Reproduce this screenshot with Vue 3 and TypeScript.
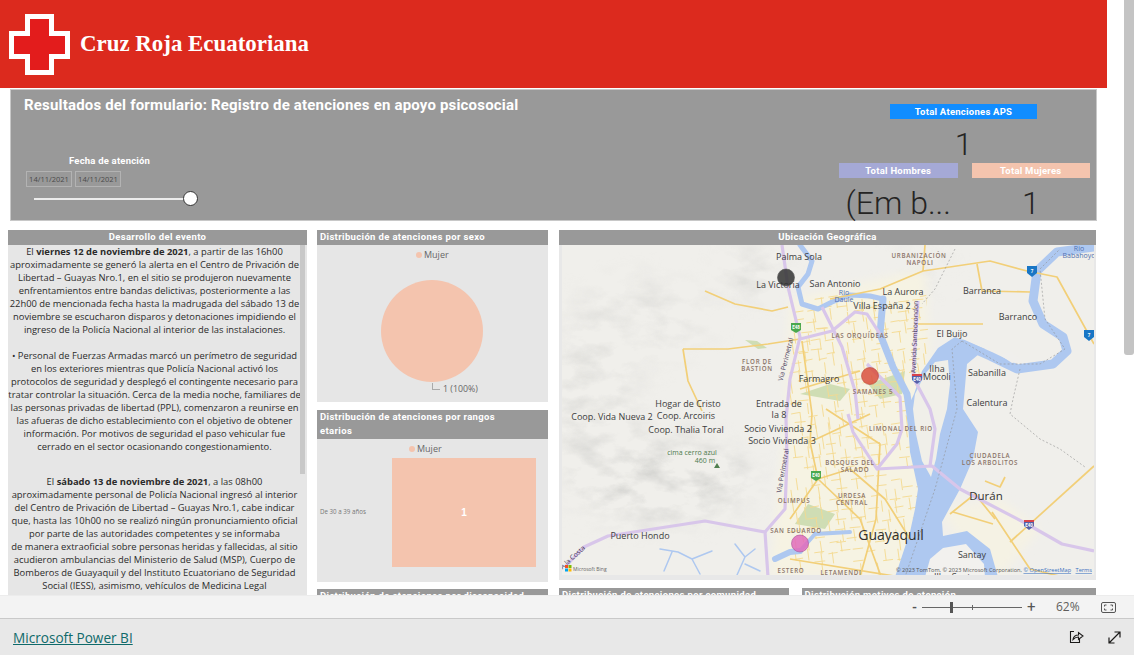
<script setup lang="ts">
interface Lbl { t: string; x: number; y: number; k?: string; r?: number }
const para1 = [
  ['El ', 'viernes 12 de noviembre de 2021', ', a partir de las 16h00'],
  ['aproximadamente se generó la alerta en el Centro de Privación de'],
  ['Libertad – Guayas Nro.1, en el sitio se produjeron nuevamente'],
  ['enfrentamientos entre bandas delictivas, posteriormente a las'],
  ['22h00 de mencionada fecha hasta la madrugada del sábado 13 de'],
  ['noviembre se escucharon disparos y detonaciones impidiendo el'],
  ['ingreso de la Policía Nacional al interior de las instalaciones.'],
]
const para2 = [
  '• Personal de Fuerzas Armadas marcó un perímetro de seguridad',
  'en los exteriores mientras que Policía Nacional activó los',
  'protocolos de seguridad y desplegó el contingente necesario para',
  'tratar controlar la situación. Cerca de la media noche, familiares de',
  'las personas privadas de libertad (PPL), comenzaron a reunirse en',
  'las afueras de dicho establecimiento con el objetivo de obtener',
  'información. Por motivos de seguridad el paso vehicular fue',
  'cerrado en el sector ocasionando congestionamiento.',
]
const para3 = [
  'aproximadamente personal de Policía Nacional ingresó al interior',
  'del Centro de Privación de Libertad – Guayas Nro.1, cabe indicar',
  'que, hasta las 10h00 no se realizó ningún pronunciamiento oficial',
  'por parte de las autoridades competentes y se informaba',
  'de manera extraoficial sobre personas heridas y fallecidas, al sitio',
  'acudieron ambulancias del Ministerio de Salud (MSP), Cuerpo de',
  'Bomberos de Guayaquil y del Instituto Ecuatoriano de Seguridad',
  'Social (IESS), asimismo, vehículos de Medicina Legal',
  '(Criminalística) también llegaron a este centro de privación',
]
const labels: Lbl[] = [
  { t: 'Palma Sola', x: 799, y: 261 }, { t: 'La Victoria', x: 778, y: 289 }, { t: 'San Antonio', x: 835, y: 288 },
  { t: 'La Aurora', x: 903, y: 296 }, { t: 'Villa España 2', x: 882, y: 310 }, { t: 'Barranca', x: 982, y: 295 },
  { t: 'Barranco', x: 1018, y: 321 }, { t: 'El Buijo', x: 952, y: 338 }, { t: 'Farmagro', x: 819, y: 383 },
  { t: 'Ilha', x: 937, y: 373 }, { t: 'Mocoli', x: 937, y: 381 }, { t: 'Sabanilla', x: 987, y: 377 },
  { t: 'Calentura', x: 987, y: 407 }, { t: 'Entrada de', x: 779, y: 408 }, { t: 'la 8', x: 779, y: 419 },
  { t: 'Hogar de Cristo', x: 688, y: 408 }, { t: 'Coop. Arcoiris', x: 686, y: 420 }, { t: 'Coop. Vida Nueva 2', x: 612, y: 421 },
  { t: 'Coop. Thalia Toral', x: 686, y: 434 }, { t: 'Socio Vivienda 2', x: 778, y: 433 }, { t: 'Socio Vivienda 3', x: 782, y: 445 },
  { t: 'Puerto Hondo', x: 640, y: 540 }, { t: 'Santay', x: 972, y: 559 }, { t: 'Ilha Santay', x: 957, y: 581 },
  { t: 'Durán', x: 986, y: 501, k: 'lg' }, { t: 'Guayaquil', x: 891, y: 541, k: 'xl' },
  { t: 'URBANIZACIÓN', x: 919, y: 259, k: 'cap' }, { t: 'NAPOLI', x: 920, y: 266, k: 'cap' },
  { t: 'LAS ORQUÍDEAS', x: 860, y: 339, k: 'cap' }, { t: 'FLOR DE', x: 757, y: 365, k: 'cap' }, { t: 'BASTIÓN', x: 757, y: 372, k: 'cap' },
  { t: 'SAMANES 5', x: 873, y: 395, k: 'cap' }, { t: 'LIMONAL DEL RIO', x: 901, y: 432, k: 'cap' },
  { t: 'CIUDADELA', x: 990, y: 459, k: 'cap' }, { t: 'LOS ARBOLITOS', x: 990, y: 466, k: 'cap' },
  { t: 'BOSQUES DEL', x: 850, y: 466, k: 'cap' }, { t: 'SALADO', x: 855, y: 473, k: 'cap' },
  { t: 'URDESA', x: 852, y: 499, k: 'cap' }, { t: 'CENTRAL', x: 852, y: 506, k: 'cap' }, { t: 'OLIMPUS', x: 794, y: 504, k: 'cap' },
  { t: 'SAN EDUARDO', x: 796, y: 534, k: 'cap' }, { t: 'ESTERO', x: 791, y: 574, k: 'cap' }, { t: 'SALADO', x: 791, y: 581, k: 'cap' },
  { t: 'LETAMENDI', x: 841, y: 576, k: 'cap' },
  { t: 'Rio', x: 1079, y: 252, k: 'wat' }, { t: 'Babahoyo', x: 1079, y: 259, k: 'wat' }, { t: 'Rio', x: 844, y: 296, k: 'wat' }, { t: 'Daule', x: 844, y: 303, k: 'wat' },
  { t: 'cima cerro azul', x: 692, y: 456, k: 'grn' }, { t: '460 m', x: 705, y: 464, k: 'grn' },
  { t: 'Via Perimetral', x: 788, y: 361, k: 'rot', r: -76 }, { t: 'Via Perimetral', x: 785, y: 472, k: 'rot', r: -80 },
  { t: 'Avenida Samborondon', x: 917, y: 338, k: 'rot', r: -88 }, { t: 'A la Costa', x: 574, y: 560, k: 'rot', r: -42 },
]
const highways = [
  'M782 246 L788 288 L800 338 L790 380 L786 420 L787 460 L785 510 L765 533 L705 522 L608 537 L584 548 L565 568',
  'M765 533 L768 578', 'M800 340 L832 332 L855 313 L867 315 L880 335', 'M822 308 L842 348 L855 392 L858 420',
  'M867 365 L900 398 L902 430 L897 445 L877 470 L853 433 L848 415', 'M877 470 L932 467 L960 490 L1027 525 L1062 545 L1094 552',
  'M918 302 L915 345 L913 378 L930 410 L935 430 L930 467',
]
const majors = [
  'M705 292 L735 305 L772 312 L788 308', 'M683 350 L728 350 L768 345 L800 340', 'M683 350 L688 382 L702 412',
  'M802 342 L812 415 L810 443 L818 480 L790 520', 'M925 246 L923 272 L990 262 L1027 272 L1057 278 L1094 345',
  'M977 265 L982 292 L1030 293', 'M918 325 L983 325', 'M1094 467 L1010 543', 'M992 513 L1030 570 L1063 578',
  'M953 513 L993 525', 'M818 480 L860 520 L882 580', 'M830 300 L880 290 L923 272', 'M826 410 L880 445 L876 520 L860 578',
  'M810 443 L870 415', 'M800 390 L860 372', 'M790 560 L900 578', 'M818 480 L850 470 L885 500 L910 540',
  'M950 515 L975 495 L995 520', 'M985 482 L1000 488 L1005 478',
]
// short, irregular street pieces rather than a full lattice
const grid: string[] = []
const wob = (n: number) => Math.sin(n * 12.9898) * 43758.5453 % 1
for (let i = 0; i < 20; i++) {
  for (let j = 0; j < 26; j++) {
    const x = 792 + i * 7 + wob(i + j * 31) * 3
    const y = 300 + j * 10.500 + wob(i * 17 + j) * 3
    const w = wob(i * 7 + j * 3)
    if (Math.abs(w) < 0.25) continue
    const seg = w > 0
      ? `M${x.toFixed(1)} ${y.toFixed(1)} l${(7 + w * 4).toFixed(1)} ${(-2 + w).toFixed(1)}`
      : `M${x.toFixed(1)} ${y.toFixed(1)} l${(1 - w).toFixed(1)} ${(10 - w * 3).toFixed(1)}`
    grid.push(seg)
  }
}
</script>

<template>
  <div class="page">
    <div class="report">
      <div class="canvas">
        <header class="brand">
          <svg class="cross" viewBox="0 0 61 61">
            <path fill="#fff" d="M16 0H45V17H61V45H45V61H16V45H0V17H16Z" />
            <path fill="#e31c1c" d="M21 5H40V22H56V40H40V56H21V40H5V22H21Z" />
          </svg>
          <span class="brand-name">Cruz Roja Ecuatoriana</span>
        </header>

        <section class="summary">
          <div class="summary-left">
            <h1>Resultados del formulario: Registro de atenciones en apoyo psicosocial</h1>
            <div class="slicer">
              <div class="slicer-title">Fecha de atención</div>
              <div class="dates"><span>14/11/2021</span><span>14/11/2021</span></div>
              <div class="track"><i></i></div>
            </div>
          </div>
          <div class="kpis">
            <div class="kpi-main">
              <div class="kpi-head blue">Total Atenciones APS</div>
              <div class="kpi-val">1</div>
            </div>
            <div class="kpi-row">
              <div class="kpi-col">
                <div class="kpi-head lav">Total Hombres</div>
                <div class="kpi-val">(Em b...</div>
              </div>
              <div class="kpi-col">
                <div class="kpi-head pch">Total Mujeres</div>
                <div class="kpi-val">1</div>
              </div>
            </div>
          </div>
        </section>

        <div class="grid">
          <section class="story">
            <h2 class="ttl center">Desarrollo del evento</h2>
            <div class="story-body">
              <div class="story-scroll"></div>
              <p v-for="(l, i) in para1" :key="'a' + i">{{ l[0] }}<b v-if="l[1]">{{ l[1] }}</b>{{ l[2] }}</p>
              <p class="blank">&nbsp;</p>
              <p v-for="l in para2" :key="l">{{ l }}</p>
              <p class="gap">El <b>sábado 13 de noviembre de 2021</b>, a las 08h00</p>
              <p v-for="l in para3" :key="l">{{ l }}</p>
            </div>
          </section>

          <div class="mid">
            <section class="card">
              <h2 class="ttl wrapnarrow">Distribución de atenciones por sexo</h2>
              <div class="pie-body">
                <div class="legend leg1"><i></i>Mujer</div>
                <div class="pie"></div>
                <div class="pie-label"><i></i>1 (100%)</div>
              </div>
            </section>
            <section class="card">
              <h2 class="ttl wrapnarrow">Distribución de atenciones por rangos etarios</h2>
              <div class="bar-body">
                <div class="legend leg2"><i></i>Mujer</div>
                <div class="bar-row">
                  <span class="axis">De 30 a 39 años</span>
                  <div class="bar">1</div>
                </div>
              </div>
            </section>
            <section class="card"><h2 class="ttl">Distribución de atenciones por discapacidad</h2></section>
          </div>

          <div class="right">
            <section class="mapcard">
              <h2 class="ttl center">Ubicación Geográfica</h2>
              <div class="map-wrap">
                <svg class="map" viewBox="562 246 532 330">
                  <defs>
                    <filter id="hill" x="0" y="0" width="100%" height="100%">
                      <feTurbulence type="fractalNoise" baseFrequency="0.03 0.055" numOctaves="4" seed="7" />
                      <feColorMatrix values="0 0 0 0 0.62  0 0 0 0 0.62  0 0 0 0 0.6  2 0 0 0 -0.82" />
                    </filter>
                    <filter id="soft"><feGaussianBlur stdDeviation="14" /></filter>
                    <filter id="soft2"><feGaussianBlur stdDeviation="5" /></filter>
                    <mask id="hillmask">
                      <g filter="url(#soft)" fill="#fff">
                        <ellipse cx="660" cy="480" rx="95" ry="42" />
                        <ellipse cx="590" cy="400" rx="50" ry="80" fill="#999" />
                        <ellipse cx="750" cy="275" rx="30" ry="22" fill="#bbb" />
                        <ellipse cx="640" cy="320" rx="70" ry="40" fill="#777" />
                        <ellipse cx="920" cy="270" rx="30" ry="16" fill="#666" />
                      </g>
                    </mask>
                    <clipPath id="city"><path d="M790 300 L925 270 L935 470 L912 578 L770 578 L785 430 Z" /></clipPath>
                  </defs>
                  <rect x="562" y="246" width="532" height="330" fill="#f0efeb" />
                  <rect x="562" y="246" width="532" height="330" filter="url(#hill)" mask="url(#hillmask)" />
                  <path d="M790 300 L925 270 L935 470 L912 578 L770 578 L785 430 Z" fill="#f6f3e3" filter="url(#soft2)" />
                  <path d="M940 510 L1000 500 L1040 530 L1000 578 L960 540 Z" fill="#f5f2e4" filter="url(#soft2)" />
                  <g fill="#cfddb4">
                    <path d="M745 341 L757 342 L767 349 L758 350 Z" />
                    <path d="M800 395 L830 385 L850 390 L840 402 Z" />
                    <path d="M868 385 L905 372 L902 395 L880 400 Z" />
                    <path d="M795 525 L808 505 L835 515 L825 530 Z" />
                    <path d="M926 368 L945 368 L945 390 L925 395 Z" />
                  </g>
                  <g fill="none" stroke="#f4d98f" stroke-width=".9" clip-path="url(#city)">
                    <path v-for="(g, i) in grid" :key="i" :d="g" />
                  </g>
                  <g fill="none" stroke="#aec8f0" stroke-linejoin="round" stroke-linecap="round">
                    <path stroke-width="5" d="M800 246 L812 262 L808 275 L798 288 L802 305 L818 310 L832 303 L850 296 L870 297 L883 300" />
                    <path stroke-width="7" d="M883 300 L880 335 L893 368 L907 395 L912 430" />
                    <path stroke-width="9" d="M1094 248 L1057 253 L1037 272 L1033 302 L1043 325 L1063 338 L1067 352 L1053 365 L1017 370 L990 357 L963 345" />
                    <path stroke-width="1.500" d="M660 550 L678 553 L692 560 L700 575 M672 553 L664 572 M692 560 L712 552 M735 545 L745 558 L737 576 M745 558 L755 550 M745 565 L760 572" />
                    <path stroke-width="6" d="M775 560 L790 553 L800 552" />
                    <path stroke-width="4" d="M800 552 L815 535 L850 533" />
                  </g>
                  <path fill="#aec8f0" d="M922 372 L938 349 L955 338 L985 350 L967 365 L963 410 L978 433 L973 460 L960 490 L942 523 L943 537 L967 532 L990 550 L998 578 L895 578 L910 533 L915 510 L918 490 L910 453 L907 410 L914 395Z" />
                  <path fill="#f0efe9" d="M925 375 L935 363 L948 361 L950 385 L947 410 L940 435 L936 460 L931 478 L922 462 L916 435 L913 410 L915 395Z" />
                  <path fill="#f2f1ee" d="M943 549 L966 545 L984 565 L985 578 L925 578 L930 560Z" />
                  <path fill="#f0efec" d="M1000 356 L1012 353 L1022 362 L1012 364Z" />
                  <g fill="none" stroke="#f2cf78" stroke-width="1.700" stroke-linejoin="round">
                    <path v-for="(m, i) in majors" :key="i" :d="m" />
                  </g>
                  <g fill="none" stroke="#d8c6ea" stroke-width="3.200" stroke-linejoin="round">
                    <path v-for="(h, i) in highways" :key="i" :d="h" />
                  </g>
                  <path fill="none" stroke="#909090" stroke-width="0.6" stroke-dasharray="2 2" d="M962 342 L952 350 L957 410 L935 490 L905 578 M962 342 L1000 365 L1040 365 L1065 350 L1045 320 L1040 270 L1060 250 M1020 370 L1013 400 L1010 415 L1040 440 L1060 450 L1085 468 M955 250 L935 290 L922 305" />
                  <g class="labels">
                    <text v-for="l in labels" :key="l.t + l.x" :x="l.x" :y="l.y" :class="l.k" :transform="l.r ? `rotate(${l.r} ${l.x} ${l.y})` : undefined" text-anchor="middle">{{ l.t }}</text>
                  </g>
                  <path d="M714 469 L717 464 L720 469Z" fill="#4f7f4f" />
                  <g>
                    <path d="M1027 267 H1037 V274 L1032 278 L1027 274Z" fill="#1976c5" /><text x="1032" y="274" class="shd">7</text>
                    <path d="M1084 331 H1094 V338 L1089 342 L1084 338Z" fill="#1976c5" /><text x="1089" y="338" class="shd">7</text>
                    <path d="M791 324 H801 V331 L796 334 L791 331Z" fill="#4aa84f" /><text x="796" y="330" class="shd">E48</text>
                    <path d="M811 472 H821 V479 L816 482 L811 479Z" fill="#4aa84f" /><text x="816" y="478" class="shd">E40</text>
                    <path d="M912 375 H922 V381 L917 385 L912 381Z" fill="#5560a8" /><rect x="912" y="375" width="10" height="2" fill="#d8434a" /><text x="917" y="382" class="shd">E40</text>
                    <path d="M1024 521 H1034 V527 L1029 531 L1024 527Z" fill="#5560a8" /><rect x="1024" y="521" width="10" height="2" fill="#d8434a" /><text x="1029" y="528" class="shd">E40</text>
                  </g>
                  <circle cx="786" cy="278.500" r="8.500" fill="#333" fill-opacity=".85" stroke="#555" stroke-width=".6" />
                  <circle cx="870" cy="377" r="8.500" fill="#d9503e" fill-opacity=".85" stroke="#b84a3c" stroke-width=".6" />
                  <circle cx="800" cy="544.500" r="8.500" fill="#e06bbb" fill-opacity=".85" stroke="#a8509a" stroke-width=".6" />
                  <g>
                    <rect x="565" y="566" width="3" height="3" fill="#f25022" /><rect x="568.500" y="566" width="3" height="3" fill="#7fba00" />
                    <rect x="565" y="569.500" width="3" height="3" fill="#00a4ef" /><rect x="568.500" y="569.500" width="3" height="3" fill="#ffb900" />
                    <text x="573" y="572" class="bing">Microsoft Bing</text>
                    <text x="896" y="573" class="copy">© 2023 TomTom, © 2023 Microsoft Corporation, <tspan class="lnk">© OpenStreetMap</tspan>  <tspan class="lnk" dx="3">Terms</tspan></text>
                  </g>
                </svg>
              </div>
            </section>
            <div class="lower">
              <section class="c2"><h2 class="ttl">Distribución de atenciones por comunidad</h2></section>
              <section class="c3"><h2 class="ttl">Distribución motivos de atención</h2></section>
            </div>
          </div>
        </div>
      </div>
      <div class="vscroll"></div>
    </div>

    <div class="zoombar">
      <span class="zm">-</span>
      <div class="zslider"><i class="ztick"></i><i class="zthumb"></i></div>
      <span class="zp">+</span>
      <span class="zpct">62%</span>
      <svg class="zfit" width="15" height="11" viewBox="0 0 15 11" fill="none" stroke="#555" stroke-width="1">
        <rect x=".5" y=".5" width="14" height="10" rx="1.500" />
        <path d="M3.500 4.500V3H5.500M9.500 3H11.500V4.500M3.500 6.500V8H5.500M9.500 8H11.500V6.500" />
      </svg>
    </div>

    <footer class="foot">
      <a class="pbi" href="#">Microsoft Power BI</a>
      <div class="foot-icons">
        <svg width="15" height="14" viewBox="0 0 15 14" fill="none" stroke="#1b1a19" stroke-width="1.100">
          <path d="M5 1.500H1.500V12.500H10.500V9" />
          <path d="M4 9.500C4.500 6.500 6.500 5 9.500 5V2.500L14 6L9.500 9.500V7C7 7 5.500 8 4 9.500Z" />
        </svg>
        <svg width="13" height="13" viewBox="0 0 13 13" fill="none" stroke="#1b1a19" stroke-width="1.200">
          <path d="M1 12L12 1M6.500 1H12V6.500M1 6.500V12H6.500" />
        </svg>
      </div>
    </footer>
  </div>
</template>

<style scoped>
.page {
  width: 1134px; height: 655px; display: flex; flex-direction: column; overflow: hidden;
  background: #fff; font-family: Roboto, "Liberation Sans", sans-serif;
}
.report { flex: 1; min-height: 0; display: flex; overflow: hidden; }
.canvas { width: 1124px; flex: none; }
.vscroll { width: 10px; height: 355px; background: #c4c4c4; border-radius: 0 0 3px 3px; }
.brand {
  width: 1107px; height: 88px; background: #dc2a1e; display: flex; align-items: center; box-sizing: border-box; padding-left: 9px; gap: 10px;
}
.cross { width: 61px; height: 61px; flex: none; }
.brand-name { font: 700 22.900px "Liberation Serif", serif; color: #fff; }
.summary {
  margin: 2px 0 0 11px; width: 1085px; height: 130px; background: #999; box-sizing: border-box;
  display: flex; justify-content: space-between; padding-right: 6px; box-shadow: 0 0 0 1px #c8c8c8;
}
.summary-left { padding: 7px 0 0 13px; }
h1 { margin: 0; font: 700 15px/16px Roboto, sans-serif; letter-spacing: .18px; color: #fff; }
.slicer { margin-top: 42px; width: 170px; position: relative; }
.slicer-title { font: 700 9.500px/11px Roboto, sans-serif; letter-spacing: .2px; color: #fff; margin-left: 45px; }
.dates { display: flex; gap: 3px; margin: 5px 0 0 2px; }
.dates span {
  width: 46px; height: 16px; box-sizing: border-box; border: 1px solid #b3b3b3; color: #4a4a4a;
  font: 7.500px/14px "Open Sans", sans-serif; text-align: center;
}
.track { margin: 11px 0 0 10px; width: 156px; height: 2px; background: #ececec; position: relative; }
.track i { position: absolute; right: -8px; top: -7px; width: 13px; height: 13px; border: 1.500px solid #333; background: #fff; border-radius: 50%; }
.kpis { width: 251px; padding-top: 14px; }
.kpi-head { height: 15px; font: 700 9.500px/15px Roboto, sans-serif; letter-spacing: .25px; color: #fff; text-align: center; }
.blue { background: #118dff; } .lav { background: #a5a9d6; } .pch { background: #f4c4ae; }
.kpi-main { width: 147px; margin-left: 51px; }
.kpi-val { font: 300 32px/50px Roboto, sans-serif; color: #252423; text-align: center; height: 44px; }
.kpi-row { display: flex; gap: 14px; }
.kpi-col { width: 118.500px; }
.kpi-row .kpi-val { line-height: 50px; }
.grid {
  display: grid; grid-template-columns: 299px 231px 538px; column-gap: 10px; margin: 10px 0 0 8px; align-items: start;
}
h2.ttl {
  margin: 0; background: #999; color: #fff; font: 700 9.500px/14.500px Roboto, sans-serif; letter-spacing: .35px; padding: 0 3px; min-height: 15px;
}
h2.wrapnarrow { padding-right: 30px; }
.center { text-align: center; }
.story-body {
  background: #e6e6e6; height: 400px; position: relative; box-sizing: border-box; color: #2b2b2b; overflow: hidden;
}
.story-scroll { position: absolute; right: 2px; top: 0; width: 5px; height: 229px; background: #c8c8c8; }
.story-body p {
  margin: 0; font: 400 9.400px/13px "Open Sans", sans-serif; text-align: center; white-space: nowrap; width: 293px;
}
.story-body b { font-weight: 700; }
.story-body p.gap { margin-top: 22px; }
.mid { display: flex; flex-direction: column; gap: 7.500px; }
.pie-body { height: 157px; background: #e6e6e6; position: relative; display: flex; justify-content: center; }
.legend { font: 400 9px/12px "Open Sans", sans-serif; color: #666; position: absolute; display: flex; align-items: center; gap: 2px; }
.legend i { width: 6px; height: 6px; border-radius: 50%; background: #f4c4ae; }
.leg1 { left: 99px; top: 4px; }
.leg2 { left: 92px; top: 4px; }
.pie { width: 102px; height: 102px; border-radius: 50%; background: #f4c4ae; margin: 35px 0 0 -1px; }
.pie-label { position: absolute; left: 115px; top: 138px; font: 400 8.800px/13px "Open Sans", sans-serif; color: #666; display: flex; align-items: flex-end; gap: 3px; }
.pie-label i { display: block; width: 7px; height: 6px; border: solid #aaa; border-width: 0 0 1px 1px; margin-bottom: 6px; }
.bar-body { height: 143px; background: #e6e6e6; position: relative; }
.bar-row { display: flex; align-items: center; padding-top: 19px; }
.axis { font: 400 6.200px/10px "Open Sans", sans-serif; color: #777; width: 75px; padding-left: 3px; box-sizing: border-box; }
.bar { width: 144px; height: 109px; background: #f4c4ae; color: #fff; font: 700 10px/109px "Liberation Sans", sans-serif; text-align: center; }
.right { margin-left: 1px; }
.map-wrap { background: #e8e8e8; padding: 0 3px 5px; height: 335px; box-sizing: border-box; }
.map { display: block; width: 532px; height: 330px; }
.labels text { font: 400 9px "Open Sans", sans-serif; fill: #3d3d3d; }
.labels text.lg { font-size: 11.500px; fill: #333; }
.labels text.xl { font-size: 14px; fill: #2f2f2f; }
.labels text.cap { font-size: 6.200px; font-weight: 600; letter-spacing: .7px; fill: #8b7468; }
.labels text.wat { font-size: 7px; fill: #4f6fb0; }
.labels text.grn { font-size: 7px; fill: #4b7a4b; }
.labels text.rot { font-size: 6.800px; fill: #4a3a5a; }
.shd { font: 700 4.500px Roboto, sans-serif; fill: #fff; text-anchor: middle; }
.bing { font: 400 5px "Open Sans", sans-serif; fill: #666; }
.copy { font: 400 5.600px "Open Sans", sans-serif; fill: #555; }
.lnk { fill: #3b6fc0; text-decoration: underline; }
.lower { display: flex; gap: 13px; margin-top: 8px; }
.c2 { width: 230px; }
.c3 { width: 295px; }
.zoombar {
  height: 22px; flex: none; background: #f3f3f3; border-top: 1px solid #ececec; border-bottom: 1px solid #c9c9c9; display: flex; align-items: center; color: #555;
  box-sizing: content-box; padding-left: 912px;
}
.zm { font: 700 13px/1 Roboto, sans-serif; width: 10px; }
.zslider { width: 100px; height: 1px; background: #666; position: relative; }
.ztick { position: absolute; left: 50px; top: -2px; width: 1px; height: 5px; background: #666; }
.zthumb { position: absolute; left: 28px; top: -5px; width: 3px; height: 11px; background: #555; }
.zp { font: 400 15px/1 Roboto, sans-serif; margin-left: 5px; width: 14px; }
.zpct { font: 400 12px/1 "Open Sans", sans-serif; color: #605e5c; margin-left: 15px; width: 24px; }
.zfit { margin-left: 21px; }
.foot { height: 36px; flex: none; background: #e8e8e8; display: flex; align-items: center; justify-content: space-between; padding: 0 13px; box-sizing: content-box; width: 1108px; }
.pbi { font: 400 13.600px "Open Sans", sans-serif; color: #0f6a6a; text-decoration: underline; }
.foot-icons { display: flex; gap: 24px; align-items: center; }
</style>
